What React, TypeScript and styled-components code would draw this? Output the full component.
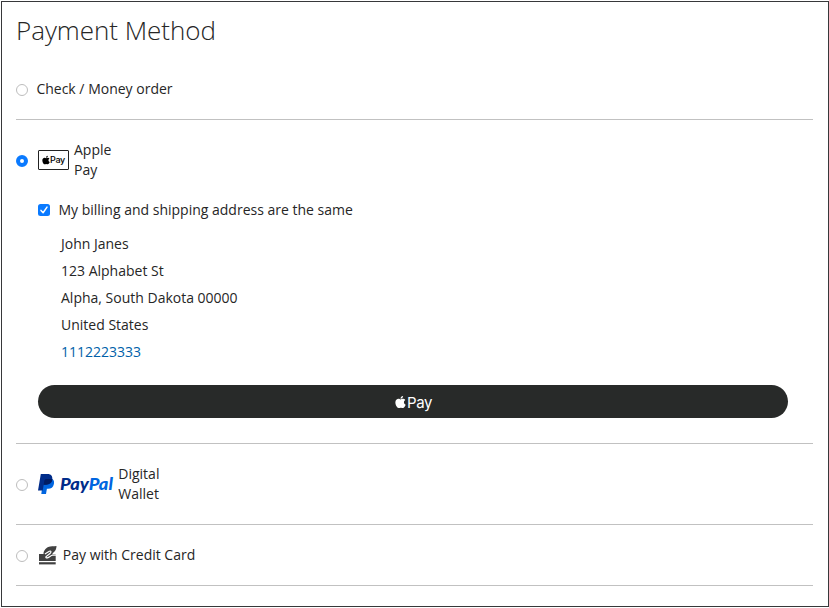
import React, { useState } from 'react';
import styled, { createGlobalStyle } from 'styled-components';
import { FaApple } from 'react-icons/fa';

const GlobalStyle = createGlobalStyle`
  *, *::before, *::after { box-sizing: border-box; }
  body {
    margin: 0;
    background: #fff;
    color: #262626;
    font: 400 14px/20px "Open Sans", "Noto Sans", sans-serif;
  }
`;

const Panel = styled.section`
  height: 606px;
  margin: 1px 0 0 1px;
  padding: 0 15px 0 14px;
  border: 1px solid #37383a;
  background: #fff;
`;

const Heading = styled.h1`
  height: 57px;
  margin: 0;
  padding-top: 10px;
  font-size: 26px;
  font-weight: 300;
  line-height: 36px;
  letter-spacing: -0.04px;
`;

const Method = styled.div`
  padding: 20px 0;
  border-bottom: 1px solid #c1c1c1;
`;

const MethodTitle = styled.label<{ $gap: number }>`
  display: flex;
  align-items: center;
  gap: ${({ $gap }) => $gap}px;
`;

const Radio = styled.input.attrs({ type: 'radio' })<{ $space: number }>`
  appearance: none;
  flex: none;
  width: 12px;
  height: 12px;
  margin: 2px ${({ $space }) => $space}px 0 0;
  border: 1px solid #bdbdbd;
  border-radius: 50%;
  background: #fff;

  &:checked {
    border: 4px solid #0a7aff;
  }
`;

const TitleText = styled.span<{ $width?: number }>`
  width: ${({ $width }) => ($width ? `${$width}px` : 'auto')};
`;

const AppleBadge = styled.span`
  display: flex;
  align-items: center;
  justify-content: center;
  width: 31px;
  height: 20px;
  border: 1px solid #222;
  border-radius: 1px;
  color: #000;
  font: 500 9px/18px Inter, sans-serif;
  letter-spacing: -0.3px;
`;

const BadgeApple = styled(FaApple)`
  width: 8px;
  height: 10px;
  margin-bottom: 1px;
`;

const PayPalBrand = styled.span`
  display: flex;
  align-items: center;
  gap: 6px;
  width: 75px;
  height: 22px;
`;

const PayPalWord = styled.span`
  color: #002c8a;
  font: italic 900 16px/22px Lato, sans-serif;
  white-space: nowrap;
  transform: scaleX(1.14);
  transform-origin: left center;
`;

const PayPalAccent = styled.span`
  color: #0065e0;
`;

const MethodContent = styled.div`
  padding: 20px 25px 5px 22px;
`;

const SameAddress = styled.label`
  display: flex;
  align-items: center;
  gap: 8.4px;
`;

const Checkbox = styled.input.attrs({ type: 'checkbox' })`
  appearance: none;
  width: 12px;
  height: 12px;
  margin: 0;
  opacity: 0;
`;

const CheckFrame = styled.span<{ $checked: boolean }>`
  display: grid;
  width: 12px;
  height: 12px;
  border-radius: 2.5px;
  background: ${({ $checked }) => ($checked ? '#0a7aff' : '#fff')};
  box-shadow: ${({ $checked }) => ($checked ? 'none' : 'inset 0 0 0 1px #bdbdbd')};

  > * { grid-area: 1 / 1; }
`;

const Address = styled.address`
  margin: 10px 0 20px;
  padding-left: 23px;
  font-style: normal;
  line-height: 27px;
`;

const Phone = styled.a`
  color: #005fa8;
  text-decoration: none;
`;

const AppleButton = styled.button`
  display: flex;
  align-items: center;
  justify-content: center;
  width: 100%;
  height: 33px;
  padding: 2px 0 0 1px;
  border: 0;
  border-radius: 17px;
  background: #282a29;
  color: #fff;
  font: 400 15px/31px Inter, sans-serif;
  letter-spacing: -0.4px;
`;

const ButtonApple = styled(FaApple)`
  width: 11px;
  height: 14px;
  margin: 0 1px 2px 0;
`;

const PayPalMark = () => (
  <svg width="16" height="20" viewBox="0 0 16 20" aria-hidden="true">
    <path d="M5.3 5h8.9c1.6 1 2.2 2.6 1.7 4.9-.7 3.3-2.8 4.900-5.800 4.900H8.900L8 20H3.300z" fill="#0065e0" />
    <path d="M2.800 0h6.900c3.300 0 5.100 2.200 4.600 5.300-.6 3.600-3 5.400-6.300 5.400H5.700L4.700 16.600H0z" fill="#002c8a" />
    <path d="M5.700 10.700l.6-3.800C6.500 5.600 7.400 5 8.700 5h5.600c0 3.700-2.700 5.700-6.300 5.700z" fill="#001c64" />
  </svg>
);

const CreditCardMark = () => (
  <svg width="19" height="19" viewBox="0 0 19 19" aria-hidden="true">
    <path d="M1 8h4.600C5.200 5.500 7.600 2.300 10.200 1.100 12.700 0 15.600.7 18.500.1c-.1 1.500-.3 3.200-1.200 4.500-.9 1.400-2.300 2.200-3.200 3.600H17.700V15H1z" fill="#414141" />
    <path d="M6.900 8l4.400-2.700c1.600-.8 2.100.2 1.200 1.500-1.100 1.500-3.200 2.300-4.400 3.900-.7 1 .2 1.400 1.300 1.100 2.100-.5 3.300-2.400 5.300-2.600h3.300" fill="none" stroke="#fff" strokeWidth="1.200" />
    <path d="M1 16.200h16.700v2.200H1z" fill="#414141" />
  </svg>
);

export default function App() {
  const [method, setMethod] = useState('apple');
  const [same, setSame] = useState(true);

  const radio = (name: string, space = 10) => (
    <Radio
      $space={space}
      name="payment"
      value={name}
      checked={method === name}
      onChange={() => setMethod(name)}
    />
  );

  return (
    <>
      <GlobalStyle />
      <Panel>
        <Heading>Payment Method</Heading>
        <Method>
          <MethodTitle $gap={0}>
            {radio('check', 8.4)}
            <TitleText>Check / Money order</TitleText>
          </MethodTitle>
        </Method>
        <Method>
          <MethodTitle $gap={5}>
            {radio('apple', 5)}
            <AppleBadge>
              <BadgeApple />
              Pay
            </AppleBadge>
            <TitleText $width={45}>Apple Pay</TitleText>
          </MethodTitle>
          <MethodContent>
            <SameAddress>
              <CheckFrame $checked={same}>
                <Checkbox checked={same} onChange={() => setSame(!same)} />
                {same && (
                  <svg width="12" height="12" viewBox="0 0 12 12" aria-hidden="true">
                    <path d="M3 6.4l2.1 2.3L9 3.1" fill="none" stroke="#fff" strokeWidth="1.5" strokeLinecap="round" strokeLinejoin="round" />
                  </svg>
                )}
              </CheckFrame>
              My billing and shipping address are the same
            </SameAddress>
            <Address>
              John Janes<br />
              123 Alphabet St<br />
              Alpha, South Dakota 00000<br />
              United States<br />
              <Phone href="tel:1112223333">1112223333</Phone>
            </Address>
            <AppleButton type="button" aria-label="Pay with Apple Pay">
              <ButtonApple />
              Pay
            </AppleButton>
          </MethodContent>
        </Method>
        <Method>
          <MethodTitle $gap={5.3}>
            {radio('paypal', 4.7)}
            <PayPalBrand>
              <PayPalMark />
              <PayPalWord>Pay<PayPalAccent>Pal</PayPalAccent></PayPalWord>
            </PayPalBrand>
            <TitleText $width={50}>Digital Wallet</TitleText>
          </MethodTitle>
        </Method>
        <Method>
          <MethodTitle $gap={5.8}>
            {radio('card', 4.2)}
            <CreditCardMark />
            <TitleText>Pay with Credit Card</TitleText>
          </MethodTitle>
        </Method>
      </Panel>
    </>
  );
}
